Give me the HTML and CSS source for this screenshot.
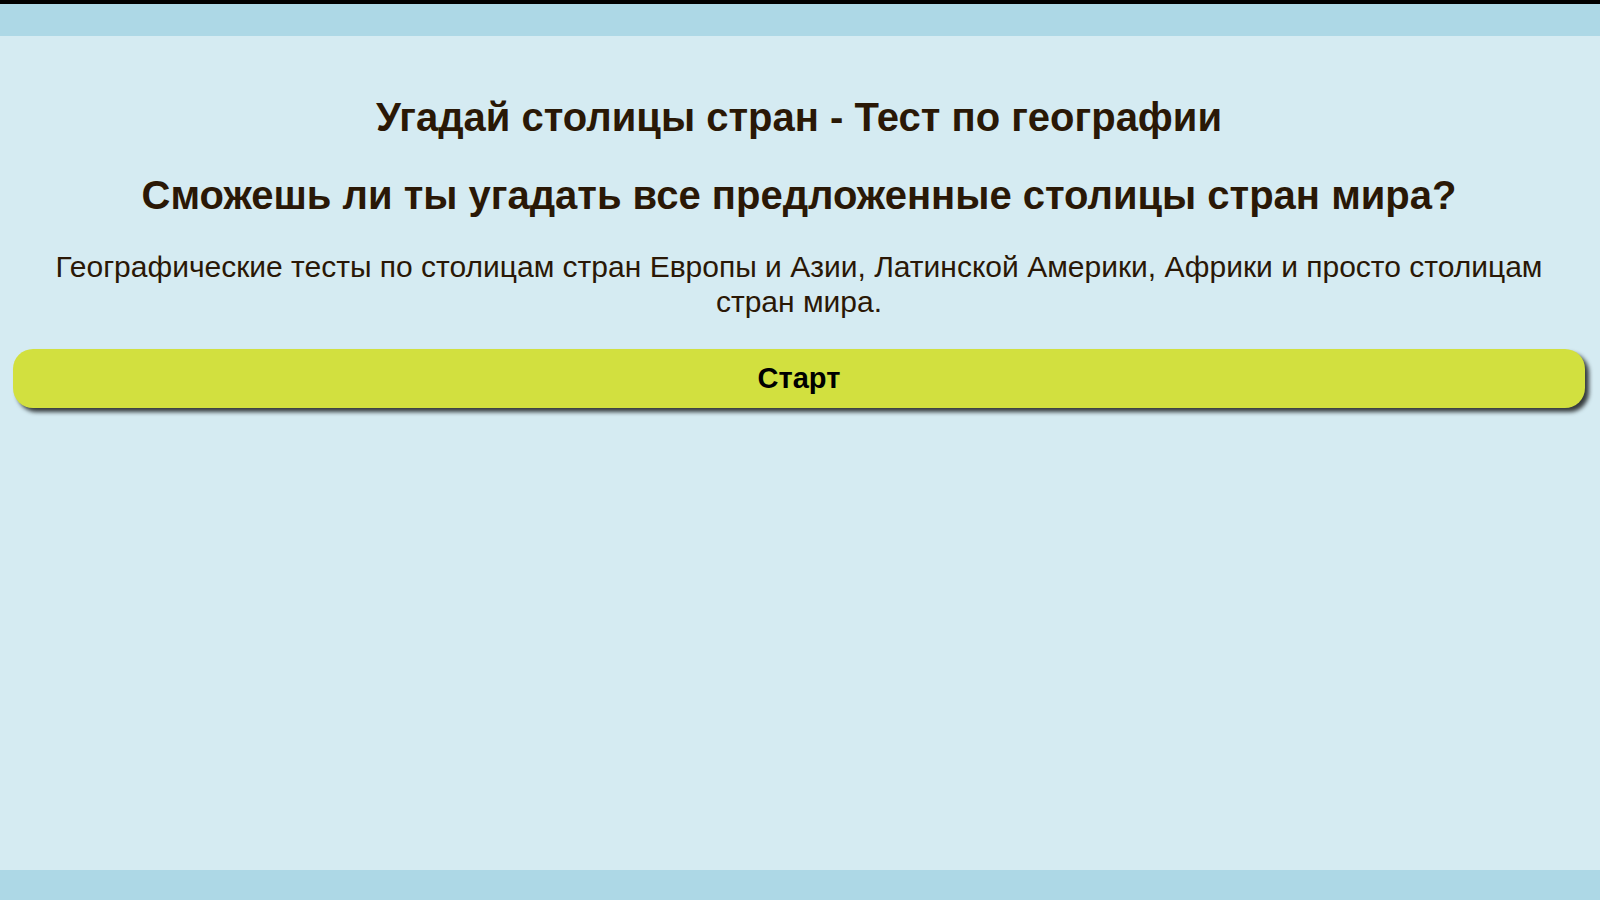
FILE: index.html
```html
<!DOCTYPE html>
<html lang="ru">
<head>
<meta charset="utf-8">
<title>Угадай столицы стран</title>
<link rel="stylesheet" href="styles.css">
</head>
<body>
<div class="page">
  <header class="topbar"></header>
  <main class="content">
    <h1 class="title">Угадай столицы стран - Тест по географии</h1>
    <h2 class="subtitle">Сможешь ли ты угадать все предложенные столицы стран мира?</h2>
    <p class="desc">Географические тесты по столицам стран Европы и Азии, Латинской Америки, Африки и просто столицам стран мира.</p>
    <button class="start">Старт</button>
  </main>
  <footer class="bottombar"></footer>
</div>
</body>
</html>
```

FILE: styles.css
```css
html, body {
  margin: 0;
  padding: 0;
  height: 100%;
}
body {
  font-family: "Liberation Sans", Arial, sans-serif;
  background: #d5ebf2;
  color: #2a1806;
}
.page {
  display: flex;
  flex-direction: column;
  height: 100vh;
}
.topbar {
  height: 32px;
  flex: none;
  border-top: 4px solid #000;
  background: #add8e6;
}
.content {
  flex: 1;
  padding: 0 15px 0 13px;
  text-align: center;
}
.title {
  font-size: 40px;
  font-weight: bold;
  margin: 58px 0 0;
  line-height: 46px;
}
.subtitle {
  font-size: 40px;
  font-weight: bold;
  margin: 32px 0 0;
  line-height: 46px;
}
.desc {
  font-size: 30px;
  line-height: 35px;
  margin: 31px 20px 0;
}
.start {
  display: block;
  width: 100%;
  margin-top: 30px;
  height: 59px;
  border: none;
  border-radius: 20px;
  background: #d2e03f;
  color: #000;
  font-family: "Liberation Sans", Arial, sans-serif;
  font-size: 29px;
  font-weight: bold;
  box-shadow: 4px 4px 4px rgba(0, 0, 0, 0.75);
  cursor: pointer;
}
.bottombar {
  height: 30px;
  flex: none;
  background: #add8e6;
}
```
